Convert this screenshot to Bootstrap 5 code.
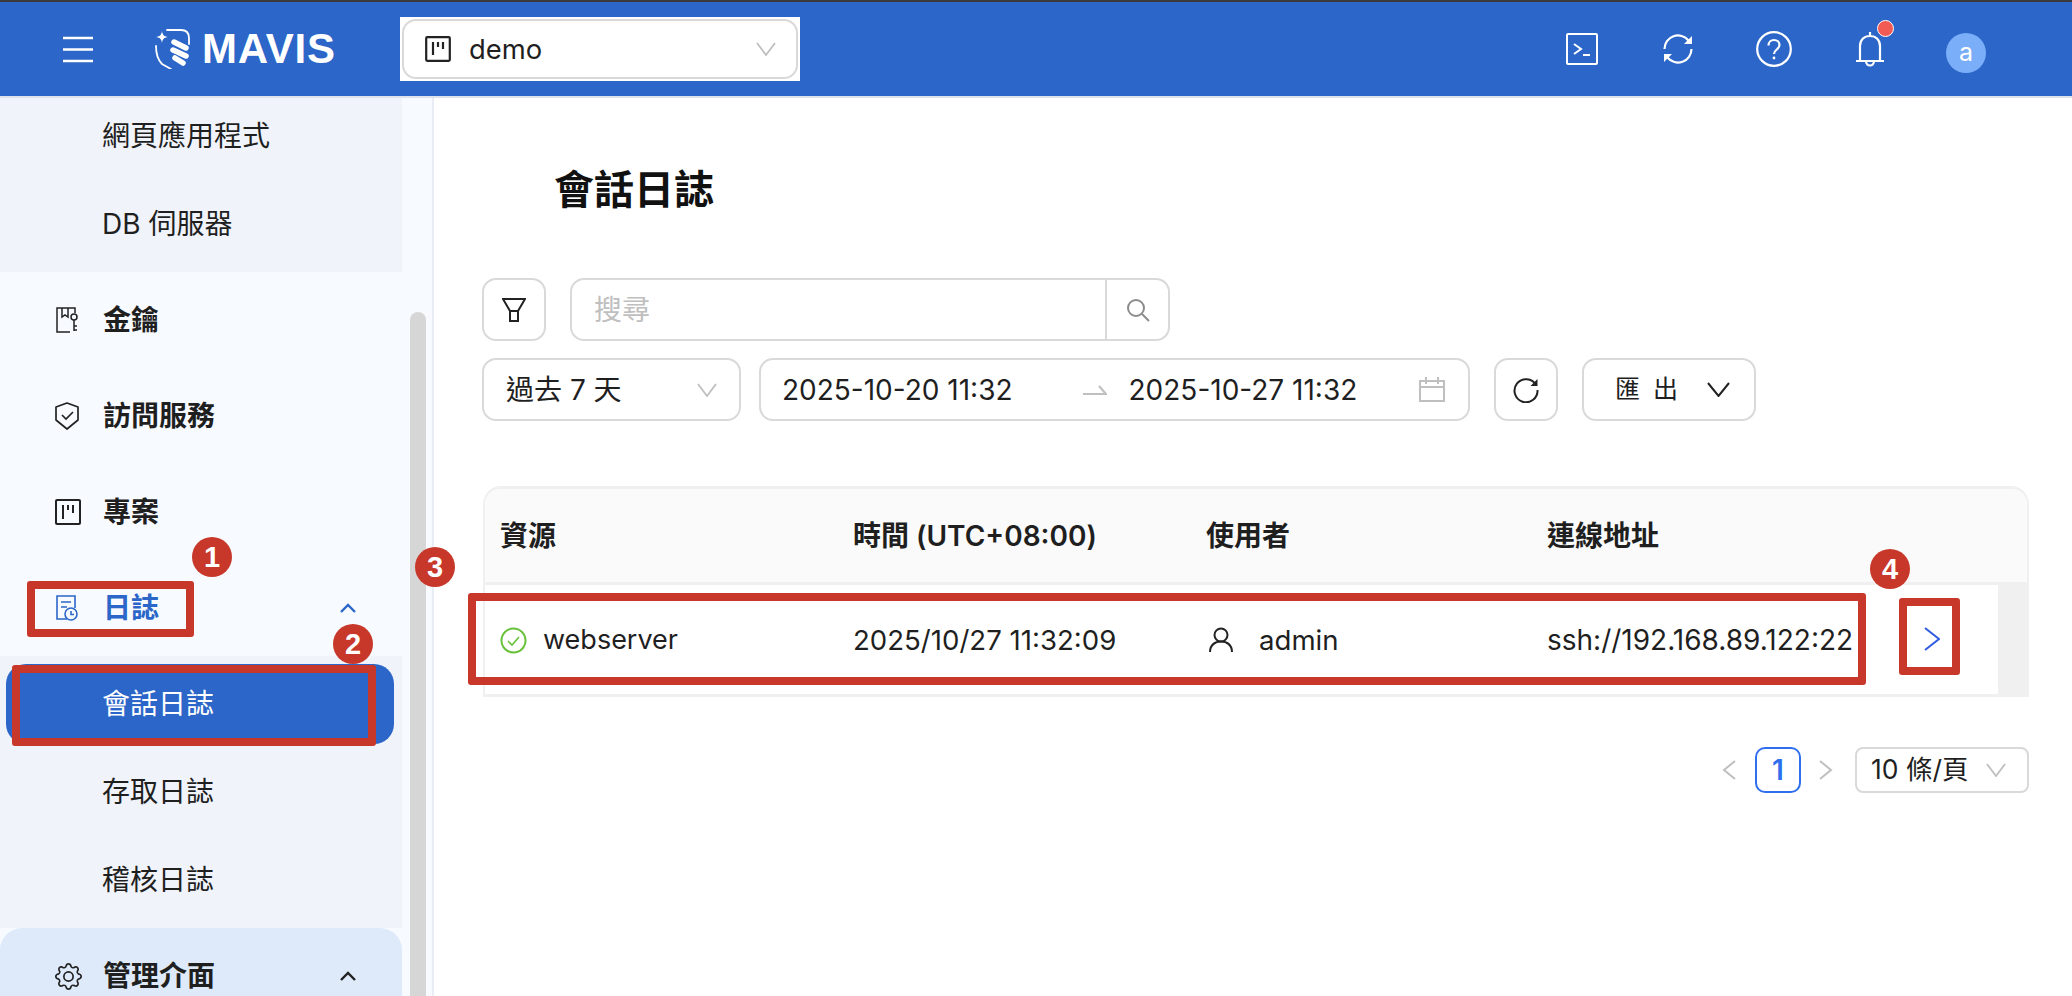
<!DOCTYPE html>
<html lang="zh-Hant">
<head>
<meta charset="utf-8">
<title>會話日誌</title>
<link href="https://cdn.jsdelivr.net/npm/bootstrap@5.3.0/dist/css/bootstrap.min.css" rel="stylesheet">
<style>
html,body{height:996px;overflow:hidden}
body{font-family:Inter,"Noto Sans CJK TC",sans-serif;font-size:28px;color:#1f1f1f;background:#fff;position:relative}
svg{display:block;flex:none}
.top-line{height:2px;background:#3a3a3a}
.app-head{background:#2b66c8;color:#fff;border-bottom:2px solid #dde3ea;box-sizing:content-box;height:94px}
.burger{margin-left:63px;width:30px}
.brand{margin-left:62px;width:182px}
.brand-word{font-family:"Liberation Sans",sans-serif;font-weight:700;font-size:42px;line-height:1;letter-spacing:.8px;margin-left:12px}
.proj-pick{margin-left:63px;width:400px;height:64px;padding-left:25px;background:#fff;color:#1f1f1f;border:0;position:relative;font-size:27.400px}
.proj-pick::before{content:"";position:absolute;inset:2px;border:2px solid #d9d9d9;border-radius:14px}
.proj-pick>*{position:relative}
.proj-pick .pick-name{margin-left:18px;padding-top:2px}
.proj-pick .pick-arrow{margin-left:auto;margin-right:24px}
.head-tools{margin-left:auto}
.tool-term{margin-right:65px}
.tool-sync{margin-right:63px}
.tool-help{margin-right:64px}
.bell-wrap{position:relative;margin-right:62px}
.bell-dot{position:absolute;left:21px;top:-11px;width:17px;height:17px;border-radius:50%;background:#f15b54;border:1.500px solid #fff}
.avatar{width:40px;height:40px;border-radius:50%;background:#7aaef8;color:#fff;font-size:25px;margin-right:86px;margin-top:8px}

.shell{height:898px}
.side{width:434px;background:#f7faff;border-right:2px solid #e8edf5;overflow:hidden;flex:none}
.side-list{width:402px;flex:none}
.side-thumb{width:16px;height:686px;margin:214px 0 0 8px;background:#d6d6d6;border-radius:8px 8px 0 0;flex:none}
.sub-list{background:#f0f4fa}
.sub-list.first{height:174px}
.sub-list.second{height:272px;padding-top:8px}
.sub-item{height:80px;margin:0 8px 8px 6px;padding-left:96px;border-radius:20px}
.sub-list.first .sub-item:first-child{height:76px;margin-bottom:10px}
.sub-item.on{background:#2b66c8;color:#fff}
.side-item{height:96px;padding-left:55px;font-weight:600}
.side-item .ic{width:26px;margin-right:22px}
.side-item .chev{margin-left:auto;margin-right:46px}
.side-item.on{color:#2b66c8}
.side-item.group{background:#deeaf9;border-radius:22px 22px 0 0}

.page{padding-left:48px;padding-right:43px}
.page-title{font-size:40px;font-weight:700;margin:0;padding-left:72px;height:180px;line-height:1;padding-top:72px;color:#111}
.tool-row.r1{height:63px;margin-bottom:17px}
.tool-row.r2{height:63px}
.bx{height:63px;border:2px solid #d9d9d9;border-radius:14px;background:#fff}
.bx-icon{width:64px}
.search-bx{width:600px;margin-left:24px}
.search-bx .ph{padding-left:22px;color:#bfbfbf;flex:1}
.search-bx .go{width:63px;height:100%;border-left:2px solid #d9d9d9}
.range-bx{width:259px;margin-right:18px;padding:0 22px}
.date-bx{width:711px;margin-right:24px;padding:0 23px 0 21px}
.date-bx .sep{margin:0 22px 0 70px}
.date-bx .cal{margin-left:auto}
.exp-bx{width:174px;margin-left:24px;padding-left:31px}
.exp-bx .exp-txt{font-size:25px;letter-spacing:13px;width:77px;white-space:nowrap}
.exp-bx svg{margin-left:15px}

.tbl-wrap{margin:65px 0 0 1px;border:solid #f0f0f0;border-width:3px 2px 3px 2px;border-radius:18px 18px 0 0;overflow:hidden;height:211px}
.log-tbl{table-layout:fixed;width:100%;margin:0;font-size:27.600px;--bs-table-bg:transparent}
.log-tbl th{background:#fafafa;height:94px;font-weight:600;font-size:28px;padding:2px 0 0 16px;border-bottom:3px solid #f0f0f0;vertical-align:middle;color:#1f1f1f}
.log-tbl td{height:111px;padding:2px 0 0 16px;border:0;vertical-align:middle;color:#1f1f1f}
.log-tbl th:first-child,.log-tbl td:first-child{padding-left:15px}
.log-tbl td.fix-shade{background:#f0f0f0;padding:0}
.log-tbl td.white-gap{padding:0}
.log-tbl .nx{white-space:nowrap}
.log-tbl .res-name{font-size:27px}
.log-tbl .addr{font-size:28px}
.pager{margin-top:50px;height:46px}
.pg-cur{width:46px;height:46px;border:2px solid #2f6fed;border-radius:10px;color:#2f6fed;font-weight:600;margin:0 18px 0 19px}
.pg-size{width:174px;height:46px;border:2px solid #d9d9d9;border-radius:8px;margin-left:22px;padding-left:14px;white-space:nowrap;font-size:26.500px}
.pg-size svg{margin-left:auto;margin-right:21px}

.mark-box{position:absolute;border:8px solid #c8382a;border-radius:3px;pointer-events:none}
.mark-dot{position:absolute;width:40px;height:40px;border-radius:50%;background:#c8382a;color:#fff;font-family:"Liberation Sans",sans-serif;font-weight:700;font-size:29px;line-height:40px;text-align:center}
.m1{left:27px;top:581px;width:167px;height:56px}
.m2{left:12px;top:665px;width:364px;height:81px}
.m3{left:468px;top:593px;width:1398px;height:92px}
.m4{left:1899px;top:598px;width:61px;height:77px}
.d1{left:192px;top:537px}
.d2{left:333px;top:624px}
.d3{left:415px;top:547px}
.d4{left:1870px;top:549px}
</style>
</head>
<body>
<div class="top-line"></div>
<header class="app-head d-flex align-items-center">
  <svg class="burger" width="30" height="27" viewBox="0 0 30 27" fill="none" stroke="#fff" stroke-width="2.600"><path d="M0 2h30M0 13.500h30M0 25h30"/></svg>
  <div class="brand d-flex align-items-center">
    <svg width="35" height="40" viewBox="0 0 35 40" fill="none" stroke="#fff">
      <path d="M7 2c-.6 4-2 5.400-6 6 4 .6 5.400 2 6 6 .6-4 2-5.400 6-6-4-.6-5.400-2-6-6z" fill="#fff" stroke="none"/>
      <path d="M12 1h14c5 0 8 3 8 8v6" stroke-width="1.800" stroke-linecap="round"/>
      <path d="M1 17c0 8 2 14 6 18l9 5" stroke-width="1.800" stroke-linecap="round"/>
      <path d="M19 13l12 6M18 21l13 6M20 29l8 5" stroke-width="5.500" stroke-linecap="round"/>
    </svg>
    <span class="brand-word">MAVIS</span>
  </div>
  <div class="proj-pick d-flex align-items-center">
    <svg width="26" height="26" viewBox="0 0 26 26" fill="none" stroke="#222" stroke-width="2.200"><rect x="1.200" y="1.200" width="23.600" height="23.600" rx="1"/><path d="M8 6v13M13 6v5M18 6v7"/></svg>
    <span class="pick-name">demo</span>
    <svg class="pick-arrow" width="20" height="14" viewBox="0 0 20 14" fill="none" stroke="#bfbfbf" stroke-width="1.800"><path d="M1 1l9 12 9-12"/></svg>
  </div>
  <div class="head-tools d-flex align-items-center">
    <svg class="tool-term" width="32" height="32" viewBox="0 0 32 32" fill="none" stroke="#fff" stroke-width="2"><rect x="1" y="1" width="30" height="30" rx="1"/><path d="M8 11l7 5-7 5M17 22h7"/></svg>
    <svg class="tool-sync" width="30" height="30" viewBox="0 0 30 30" fill="none" stroke="#fff" stroke-width="2.200"><path d="M1.500 15A13.500 13.500 0 0 1 25.500 6.500M28.500 15A13.500 13.500 0 0 1 4.500 23.500"/><path d="M29 2v8h-8zM1 28v-8h8z" fill="#fff" stroke="none"/></svg>
    <svg class="tool-help" width="36" height="36" viewBox="0 0 36 36" fill="none" stroke="#fff" stroke-width="2.200"><circle cx="18" cy="18" r="16.800"/><path d="M12.500 14.500c0-3.500 2.500-5.500 5.500-5.500s5.500 2 5.500 5c0 4.500-5.500 4.500-5.500 9"/><circle cx="18" cy="27" r="1.400" fill="#fff" stroke="none"/></svg>
    <div class="bell-wrap">
      <svg width="28" height="36" viewBox="0 0 28 36" fill="none" stroke="#fff" stroke-width="2.200"><path d="M14 1v4M0 30h28M4 30V15C4 9 8 5 14 5s10 4 10 10v15M10 30c0 6 8 6 8 0"/></svg>
      <span class="bell-dot"></span>
    </div>
    <div class="avatar d-flex align-items-center justify-content-center">a</div>
  </div>
</header>

<div class="shell d-flex">
  <aside class="side d-flex">
    <nav class="side-list">
      <div class="sub-list first">
        <div class="sub-item d-flex align-items-center">網頁應用程式</div>
        <div class="sub-item d-flex align-items-center">DB 伺服器</div>
      </div>
      <div class="side-item d-flex align-items-center">
        <span class="ic"><svg width="24" height="26" viewBox="0 0 24 26" fill="none" stroke="#222" stroke-width="1.500"><path d="M20 6V1H2v24h13M7 1v9l3-2 3 2V1M19 13v11M19 19h3M19 23h3"/><circle cx="19" cy="10" r="3"/></svg></span>金鑰
      </div>
      <div class="side-item d-flex align-items-center">
        <span class="ic"><svg width="24" height="28" viewBox="0 0 24 28" fill="none" stroke="#222" stroke-width="1.700"><path d="M12 1l11 4v13l-11 9-11-9V5z" stroke-linejoin="round"/><path d="M7 13l4 4 7-7"/></svg></span>訪問服務
      </div>
      <div class="side-item d-flex align-items-center">
        <span class="ic"><svg width="26" height="26" viewBox="0 0 26 26" fill="none" stroke="#222" stroke-width="2"><rect x="1" y="1" width="24" height="24" rx="1"/><path d="M8 6v14M13 6v5M18 6v8"/></svg></span>專案
      </div>
      <div class="side-item on d-flex align-items-center">
        <span class="ic"><svg width="24" height="26" viewBox="0 0 24 26" fill="none" stroke="#2b66c8" stroke-width="1.600"><path d="M12 24H2V1h18v12M6 7h10M6 12h6"/><circle cx="16" cy="19" r="6"/><path d="M16 16v3.500h3"/></svg></span>日誌
        <svg class="chev" width="16" height="10" viewBox="0 0 16 10" fill="none" stroke="#2b66c8" stroke-width="2.400"><path d="M1 9l7-7 7 7"/></svg>
      </div>
      <div class="sub-list second">
        <div class="sub-item on d-flex align-items-center">會話日誌</div>
        <div class="sub-item d-flex align-items-center">存取日誌</div>
        <div class="sub-item d-flex align-items-center">稽核日誌</div>
      </div>
      <div class="side-item group d-flex align-items-center">
        <span class="ic"><svg width="27" height="27" viewBox="0 0 16 16" fill="#222"><path d="M8 4.754a3.246 3.246 0 1 0 0 6.492 3.246 3.246 0 0 0 0-6.492zM5.754 8a2.246 2.246 0 1 1 4.492 0 2.246 2.246 0 0 1-4.492 0z"/><path d="M9.796 1.343c-.527-1.790-3.065-1.790-3.592 0l-.094.319a.873.873 0 0 1-1.255.52l-.292-.16c-1.640-.892-3.433.902-2.540 2.541l.159.292a.873.873 0 0 1-.52 1.255l-.319.094c-1.790.527-1.790 3.065 0 3.592l.319.094a.873.873 0 0 1 .52 1.255l-.16.292c-.892 1.640.901 3.434 2.541 2.540l.292-.159a.873.873 0 0 1 1.255.52l.094.319c.527 1.790 3.065 1.790 3.592 0l.094-.319a.873.873 0 0 1 1.255-.52l.292.16c1.640.893 3.434-.902 2.540-2.541l-.159-.292a.873.873 0 0 1 .52-1.255l.319-.094c1.790-.527 1.790-3.065 0-3.592l-.319-.094a.873.873 0 0 1-.52-1.255l.16-.292c.893-1.640-.902-3.433-2.541-2.540l-.292.159a.873.873 0 0 1-1.255-.52l-.094-.319zm-2.633.283c.246-.835 1.428-.835 1.674 0l.094.319a1.873 1.873 0 0 0 2.693 1.115l.291-.16c.764-.415 1.600.42 1.184 1.185l-.159.292a1.873 1.873 0 0 0 1.116 2.692l.318.094c.835.246.835 1.428 0 1.674l-.319.094a1.873 1.873 0 0 0-1.115 2.693l.16.291c.415.764-.42 1.600-1.185 1.184l-.291-.159a1.873 1.873 0 0 0-2.693 1.116l-.094.318c-.246.835-1.428.835-1.674 0l-.094-.319a1.873 1.873 0 0 0-2.692-1.115l-.292.16c-.764.415-1.600-.42-1.184-1.185l.159-.291A1.873 1.873 0 0 0 1.945 8.930l-.319-.094c-.835-.246-.835-1.428 0-1.674l.319-.094A1.873 1.873 0 0 0 3.060 4.377l-.16-.292c-.415-.764.42-1.600 1.185-1.184l.292.159a1.873 1.873 0 0 0 2.692-1.115l.094-.319z"/></svg></span>管理介面
        <svg class="chev" width="16" height="10" viewBox="0 0 16 10" fill="none" stroke="#222" stroke-width="2.400"><path d="M1 9l7-7 7 7"/></svg>
      </div>
    </nav>
    <div class="side-thumb"></div>
  </aside>

  <main class="page flex-grow-1">
    <h1 class="page-title">會話日誌</h1>
    <div class="tool-row r1 d-flex">
      <div class="bx bx-icon d-flex align-items-center justify-content-center">
        <svg width="24" height="24" viewBox="0 0 24 24" fill="none" stroke="#222" stroke-width="2"><path d="M1 1h22l-7 12H8zM8 13h8v10H8z" stroke-linejoin="miter"/></svg>
      </div>
      <div class="bx search-bx d-flex align-items-center">
        <span class="ph">搜尋</span>
        <span class="go d-flex align-items-center justify-content-center">
          <svg width="26" height="26" viewBox="0 0 26 26" fill="none" stroke="#8c8c8c" stroke-width="2"><circle cx="11" cy="11" r="8"/><path d="M17 17l7 7"/></svg>
        </span>
      </div>
    </div>
    <div class="tool-row r2 d-flex">
      <div class="bx range-bx d-flex align-items-center">
        <span>過去 7 天</span>
        <svg class="ms-auto" width="20" height="14" viewBox="0 0 20 14" fill="none" stroke="#bfbfbf" stroke-width="1.800"><path d="M1 1l9 12 9-12"/></svg>
      </div>
      <div class="bx date-bx d-flex align-items-center">
        <span>2025-10-20 11:32</span>
        <svg class="sep" width="24" height="12" viewBox="0 0 24 12" fill="none" stroke="#bfbfbf" stroke-width="2"><path d="M0 10h23L16 2"/></svg>
        <span>2025-10-27 11:32</span>
        <svg class="cal" width="26" height="25" viewBox="0 0 26 25" fill="none" stroke="#bfbfbf" stroke-width="2"><rect x="1" y="4" width="24" height="20"/><path d="M1 10h24M7 0v7M19 0v7"/></svg>
      </div>
      <div class="bx bx-icon d-flex align-items-center justify-content-center">
        <svg width="26" height="26" viewBox="0 0 26 26" fill="none" stroke="#222" stroke-width="2"><path d="M23 8A11.500 11.500 0 1 0 24.500 13"/><path d="M24.500 2v7h-7z" fill="#222" stroke="none"/></svg>
      </div>
      <div class="bx exp-bx d-flex align-items-center">
        <span class="exp-txt">匯出</span>
        <svg width="23" height="15" viewBox="0 0 23 15" fill="none" stroke="#222" stroke-width="2"><path d="M1 1l10.500 13L22 1"/></svg>
      </div>
    </div>
    <div class="tbl-wrap">
      <table class="table log-tbl">
        <colgroup><col style="width:352px"><col style="width:353px"><col style="width:341px"><col style="width:336px"><col style="width:131px"><col style="width:29px"></colgroup>
        <thead><tr><th>資源</th><th>時間 (UTC+08:00)</th><th>使用者</th><th colspan="3">連線地址</th></tr></thead>
        <tbody><tr>
          <td><span class="d-flex align-items-center nx res-name"><svg class="me-3" width="27" height="27" viewBox="0 0 27 27" fill="none" stroke="#67c23a" stroke-width="2"><circle cx="13.500" cy="13.500" r="12"/><path d="M8 14l4 4 7-8" stroke-width="1.600"/></svg>webserver</span></td>
          <td class="nx">2025/10/27 11:32:09</td>
          <td><span class="d-flex align-items-center nx"><svg width="24" height="26" viewBox="0 0 24 26" fill="none" stroke="#222" stroke-width="2" style="margin-left:3px;margin-right:26px"><circle cx="12" cy="8" r="6.500"/><path d="M1 25c0-7 5-10.500 11-10.500S23 18 23 25"/></svg>admin</span></td>
          <td class="nx addr">ssh://192.168.89.122:22</td>
          <td class="white-gap"><span class="d-flex"><svg width="16" height="24" viewBox="0 0 16 24" fill="none" stroke="#2f5be0" stroke-width="2" style="margin-left:57px"><path d="M1 1l14 11L1 23"/></svg></span></td>
          <td class="fix-shade"></td>
        </tr></tbody>
      </table>
    </div>
    <div class="pager d-flex align-items-center justify-content-end">
      <svg width="14" height="20" viewBox="0 0 14 20" fill="none" stroke="#bfbfbf" stroke-width="2"><path d="M13 1L2 10l11 9"/></svg>
      <div class="pg-cur d-flex align-items-center justify-content-center">1</div>
      <svg width="14" height="20" viewBox="0 0 14 20" fill="none" stroke="#bfbfbf" stroke-width="2"><path d="M1 1l11 9-11 9"/></svg>
      <div class="pg-size d-flex align-items-center">10 條/頁
        <svg width="20" height="14" viewBox="0 0 20 14" fill="none" stroke="#bfbfbf" stroke-width="1.800"><path d="M1 1l9 12 9-12"/></svg>
      </div>
    </div>
  </main>
</div>

<div class="mark-box m1"></div>
<div class="mark-box m2"></div>
<div class="mark-box m3"></div>
<div class="mark-box m4"></div>
<div class="mark-dot d1">1</div>
<div class="mark-dot d2">2</div>
<div class="mark-dot d3">3</div>
<div class="mark-dot d4">4</div>
<script src="https://cdn.jsdelivr.net/npm/bootstrap@5.3.0/dist/js/bootstrap.bundle.min.js"></script>
</body>
</html>
